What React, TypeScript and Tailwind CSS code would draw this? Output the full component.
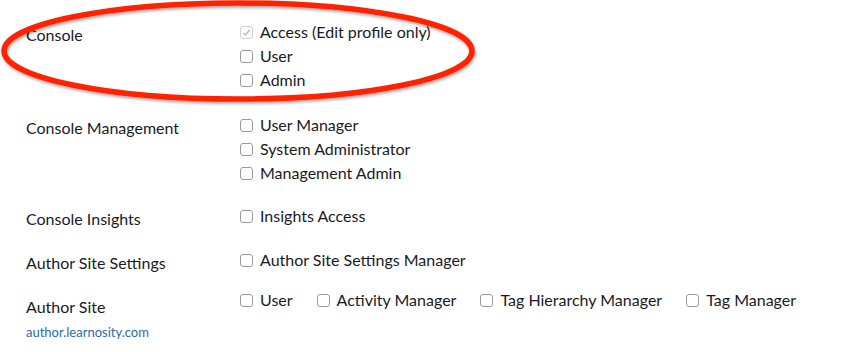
import React from "react";

function Box({ checked = false }: { checked?: boolean }) {
  return (
    <span
      className={
        "inline-flex h-[13px] w-[13px] shrink-0 items-center justify-center rounded-[3px] border bg-white " +
        (checked ? "border-[#cfcfcf]" : "border-[#9a9a9a]")
      }
    >
      {checked && (
        <svg width="9" height="9" viewBox="0 0 9 9" fill="none">
          <path d="M1.5 4.8 L3.6 6.9 L7.6 1.8" stroke="#a8a8a8" strokeWidth="1.2" />
        </svg>
      )}
    </span>
  );
}

function Opt({ label, checked = false }: { label: string; checked?: boolean }) {
  return (
    <div className="flex h-6 items-center">
      <Box checked={checked} />
      <span className="ml-[7px]">{label}</span>
    </div>
  );
}

export default function App() {
  return (
    <div
      className="relative h-[352px] w-[864px] overflow-hidden bg-white text-[16px] leading-6 text-[#1a1a26]"
      style={{ fontFamily: "Lato, 'Liberation Sans', sans-serif" }}
    >
      <div className="flex flex-col pl-[26px] pt-[20px]">
        <div className="flex">
          <div className="w-[214px] pt-[3px] leading-6">Console</div>
          <div className="flex flex-col">
            <Opt label="Access (Edit profile only)" checked />
            <Opt label="User" />
            <Opt label="Admin" />
          </div>
        </div>
        <div className="mt-[21px] flex">
          <div className="w-[214px] pt-[3px] leading-6">Console Management</div>
          <div className="flex flex-col">
            <Opt label="User Manager" />
            <Opt label="System Administrator" />
            <Opt label="Management Admin" />
          </div>
        </div>
        <div className="mt-[19px] flex">
          <div className="w-[214px] pt-[3px] leading-6">Console Insights</div>
          <div className="flex flex-col">
            <Opt label="Insights Access" />
          </div>
        </div>
        <div className="mt-[17px] flex">
          <div className="w-[214px] pt-[3px] leading-6">Author Site Settings</div>
          <div className="flex flex-col">
            <Opt label="Author Site Settings Manager" />
          </div>
        </div>
        <div className="mt-[13px] flex">
          <div className="flex w-[214px] flex-col pt-[7px]">
            <div className="leading-6">Author Site</div>
            <div className="mt-[4px] text-[13px] leading-[18px] text-[#2a6aad]">author.learnosity.com</div>
          </div>
          <div className="flex gap-[24px]">
            <Opt label="User" />
            <Opt label="Activity Manager" />
            <Opt label="Tag Hierarchy Manager" />
            <Opt label="Tag Manager" />
          </div>
        </div>
      </div>
      <svg
        className="pointer-events-none absolute left-0 top-0"
        width="864"
        height="352"
        viewBox="0 0 864 352"
      >
        <defs>
          <filter id="sh" x="-10%" y="-20%" width="120%" height="150%">
            <feDropShadow dx="1" dy="2" stdDeviation="1.5" floodColor="#000" floodOpacity="0.35" />
          </filter>
        </defs>
        <ellipse
          cx="238"
          cy="51"
          rx="234"
          ry="48"
          fill="none"
          stroke="#ff2200"
          strokeWidth="5.5"
          filter="url(#sh)"
        />
      </svg>
    </div>
  );
}
